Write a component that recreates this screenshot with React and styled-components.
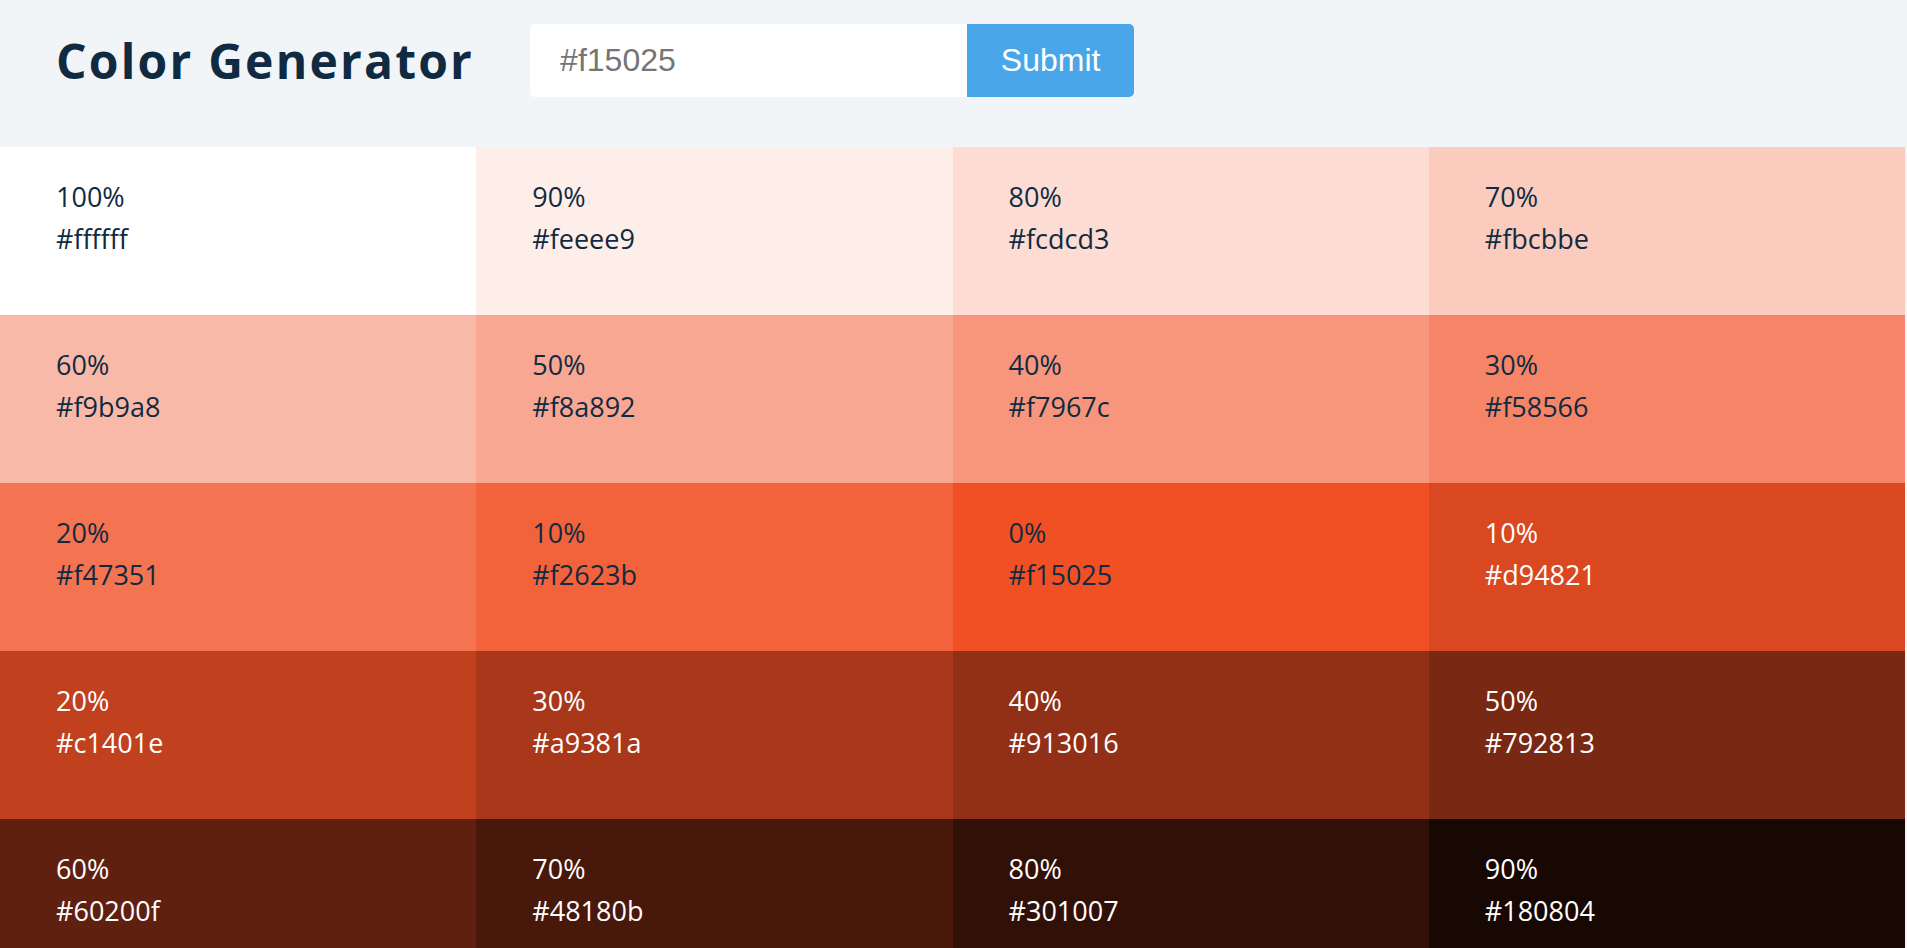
import React, { useState } from 'react';
import styled, { createGlobalStyle } from 'styled-components';

/* swatches: tints down to the base, then shades */
const colors = [
  { weight: 100, hex: '#ffffff' },
  { weight: 90, hex: '#feeee9' },
  { weight: 80, hex: '#fcdcd3' },
  { weight: 70, hex: '#fbcbbe' },
  { weight: 60, hex: '#f9b9a8' },
  { weight: 50, hex: '#f8a892' },
  { weight: 40, hex: '#f7967c' },
  { weight: 30, hex: '#f58566' },
  { weight: 20, hex: '#f47351' },
  { weight: 10, hex: '#f2623b' },
  { weight: 0, hex: '#f15025' },
  { weight: 10, hex: '#d94821' },
  { weight: 20, hex: '#c1401e' },
  { weight: 30, hex: '#a9381a' },
  { weight: 40, hex: '#913016' },
  { weight: 50, hex: '#792813' },
  { weight: 60, hex: '#60200f' },
  { weight: 70, hex: '#48180b' },
  { weight: 80, hex: '#301007' },
  { weight: 90, hex: '#180804' },
  { weight: 100, hex: '#000000' },
];

const GlobalStyle = createGlobalStyle`
  * { box-sizing: border-box; }
  body {
    margin: 0;
    background: #f1f5f8;
    font-family: "Open Sans", "Noto Sans", sans-serif;
    overflow: hidden;
  }
`;

function App() {
  const [color, setColor] = useState('');

  const handleSubmit = (e) => {
    e.preventDefault();
  };

  return (
    <>
      <GlobalStyle />
      <Header>
        <Title>Color Generator</Title>
        <Form onSubmit={handleSubmit}>
          <Input
            type="text"
            value={color}
            placeholder="#f15025"
            onChange={(e) => setColor(e.target.value)}
          />
          <Button type="submit">Submit</Button>
        </Form>
      </Header>
      <Colors>
        {colors.map((c, index) => (
          <Swatch key={index} $bg={c.hex} $light={index > 10}>
            <Percent>{c.weight}%</Percent>
            <Hex>{c.hex}</Hex>
          </Swatch>
        ))}
      </Colors>
    </>
  );
}

const Header = styled.section`
  height: 147px;
  display: flex;
  align-items: flex-start;
  padding: 24px 0 0 56px;
  background: #f1f5f8;
`;

const Title = styled.h3`
  margin: 0 56px 0 0;
  height: 73px;
  display: flex;
  align-items: center;
  font-size: 48px;
  font-weight: 700;
  letter-spacing: 2.2px;
  color: #102a42;
`;

const Form = styled.form`
  display: flex;
`;

const Input = styled.input`
  width: 437px;
  height: 73px;
  border: none;
  outline: none;
  padding: 0 30px;
  font-family: "Liberation Sans", Arial, sans-serif;
  font-size: 32px;
  color: #102a42;
  background: #ffffff;
  border-radius: 5px 0 0 5px;
  &::placeholder {
    color: #757575;
  }
`;

const Button = styled.button`
  width: 167px;
  height: 73px;
  border: none;
  padding: 0;
  font-family: "Liberation Sans", Arial, sans-serif;
  font-size: 32px;
  color: #ffffff;
  background: #49a6e9;
  border-radius: 0 5px 5px 0;
  cursor: pointer;
`;

const Colors = styled.section`
  width: calc(100% - 2px);
  display: grid;
  grid-template-columns: repeat(4, 1fr);
  grid-auto-rows: 168px;
`;

const Swatch = styled.article`
  padding: 29px 56px;
  background: ${(p) => p.$bg};
  color: ${(p) => (p.$light ? '#ffffff' : '#102a42')};
  font-size: 27px;
  line-height: 42px;
  cursor: pointer;
`;

const Percent = styled.p`
  margin: 0;
`;

const Hex = styled.p`
  margin: 0;
`;

export default App;
